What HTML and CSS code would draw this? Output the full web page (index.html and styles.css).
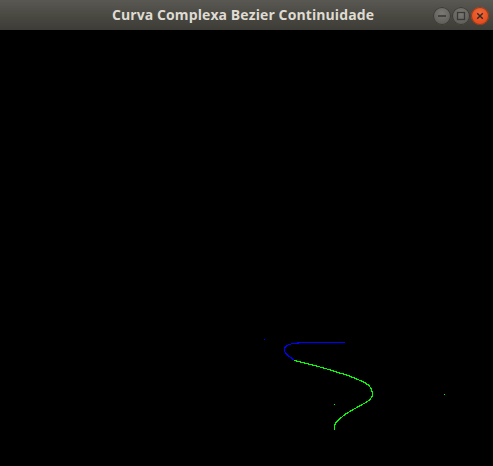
FILE: index.html
```html
<!DOCTYPE html>
<html lang="pt">
<head>
<meta charset="utf-8">
<title>Curva Complexa Bezier Continuidade</title>
<link rel="stylesheet" href="styles.css">
</head>
<body>
<div class="window">
  <header class="titlebar">
    <div class="spacer"></div>
    <div class="title">Curva Complexa Bezier Continuidade</div>
    <div class="controls">
      <span class="btn btn-min">
        <svg width="18" height="18" viewBox="0 0 18 18"><line x1="5" y1="9" x2="13" y2="9" stroke="#3a3935" stroke-width="1.6"/></svg>
      </span>
      <span class="btn btn-max">
        <svg width="18" height="18" viewBox="0 0 18 18"><rect x="5.5" y="5.5" width="7" height="7" fill="none" stroke="#3a3935" stroke-width="1.3"/></svg>
      </span>
      <span class="btn btn-close">
        <svg width="18" height="18" viewBox="0 0 18 18"><path d="M6.2 6.2 L11.8 11.8 M11.8 6.2 L6.2 11.8" stroke="#3c2a20" stroke-width="1.5"/></svg>
      </span>
    </div>
  </header>
  <main class="canvas">
    <svg class="plot" width="493" height="436" viewBox="0 30 493 436">
      <rect x="264" y="339" width="1" height="1" fill="#0000ff"/>
      <rect x="334" y="404" width="1" height="1" fill="#00ff00"/>
      <rect x="444" y="394" width="1" height="1" fill="#00ff00"/>
      <polyline class="curve-blue" points="344.5,342.5 303,342.5 298,343 293,343.5 289,344.5 286.5,346 285,347.5 284.5,349 284.5,351.5 286,353.5 288.5,355.8 291.5,358.2 294.5,360.5"/>
      <polyline class="curve-green" points="294.5,360.5 305,363.2 315,365.6 325,368.4 335,371.5 348,375.5 358,379.5 365,382.7 369,385.6 371.5,389 372.5,393 372,397 369.5,400 366,402.5 362,404.6 355,408.5 345,414.5 339.5,419 336,422.6 334.5,426 334.5,429.5"/>
    </svg>
  </main>
</div>
</body>
</html>
```

FILE: styles.css
```css
html, body {
  margin: 0;
  padding: 0;
  background: #000;
}

.window {
  width: 493px;
  height: 466px;
  display: flex;
  flex-direction: column;
  background: #000;
}

.titlebar {
  height: 30px;
  flex: 0 0 30px;
  display: grid;
  grid-template-columns: 1fr auto 1fr;
  align-items: center;
  background: linear-gradient(#5a5853, #47463f 60%, #3d3c37);
  box-sizing: border-box;
}

.title {
  font-family: "Open Sans", "DejaVu Sans", sans-serif;
  font-weight: 700;
  font-size: 14px;
  color: #dfdbd2;
  white-space: nowrap;
  margin-right: 7px;
  letter-spacing: 0.1px;
  line-height: 30px;
}

.controls {
  display: flex;
  justify-content: flex-end;
  align-items: center;
  gap: 1px;
  padding-right: 4px;
  padding-top: 1px;
}

.btn {
  width: 18px;
  height: 18px;
  border-radius: 50%;
  display: flex;
  box-sizing: border-box;
}

.btn svg {
  display: block;
}

.btn-min,
.btn-max {
  background: radial-gradient(circle at 50% 35%, #7a7974, #5e5d58 75%);
  box-shadow: inset 0 0 0 1px #3b3a36;
}

.btn-close {
  background: radial-gradient(circle at 50% 35%, #f26a3a, #e0491b 75%);
  box-shadow: inset 0 0 0 1px #8f3a1d;
}

.canvas {
  flex: 1;
  background: #000;
  overflow: hidden;
}

.plot {
  display: block;
  shape-rendering: crispEdges;
}

.curve-blue {
  fill: none;
  stroke: #0000ff;
  stroke-width: 1.2;
}

.curve-green {
  fill: none;
  stroke: #00ff00;
  stroke-width: 1.2;
}
```
